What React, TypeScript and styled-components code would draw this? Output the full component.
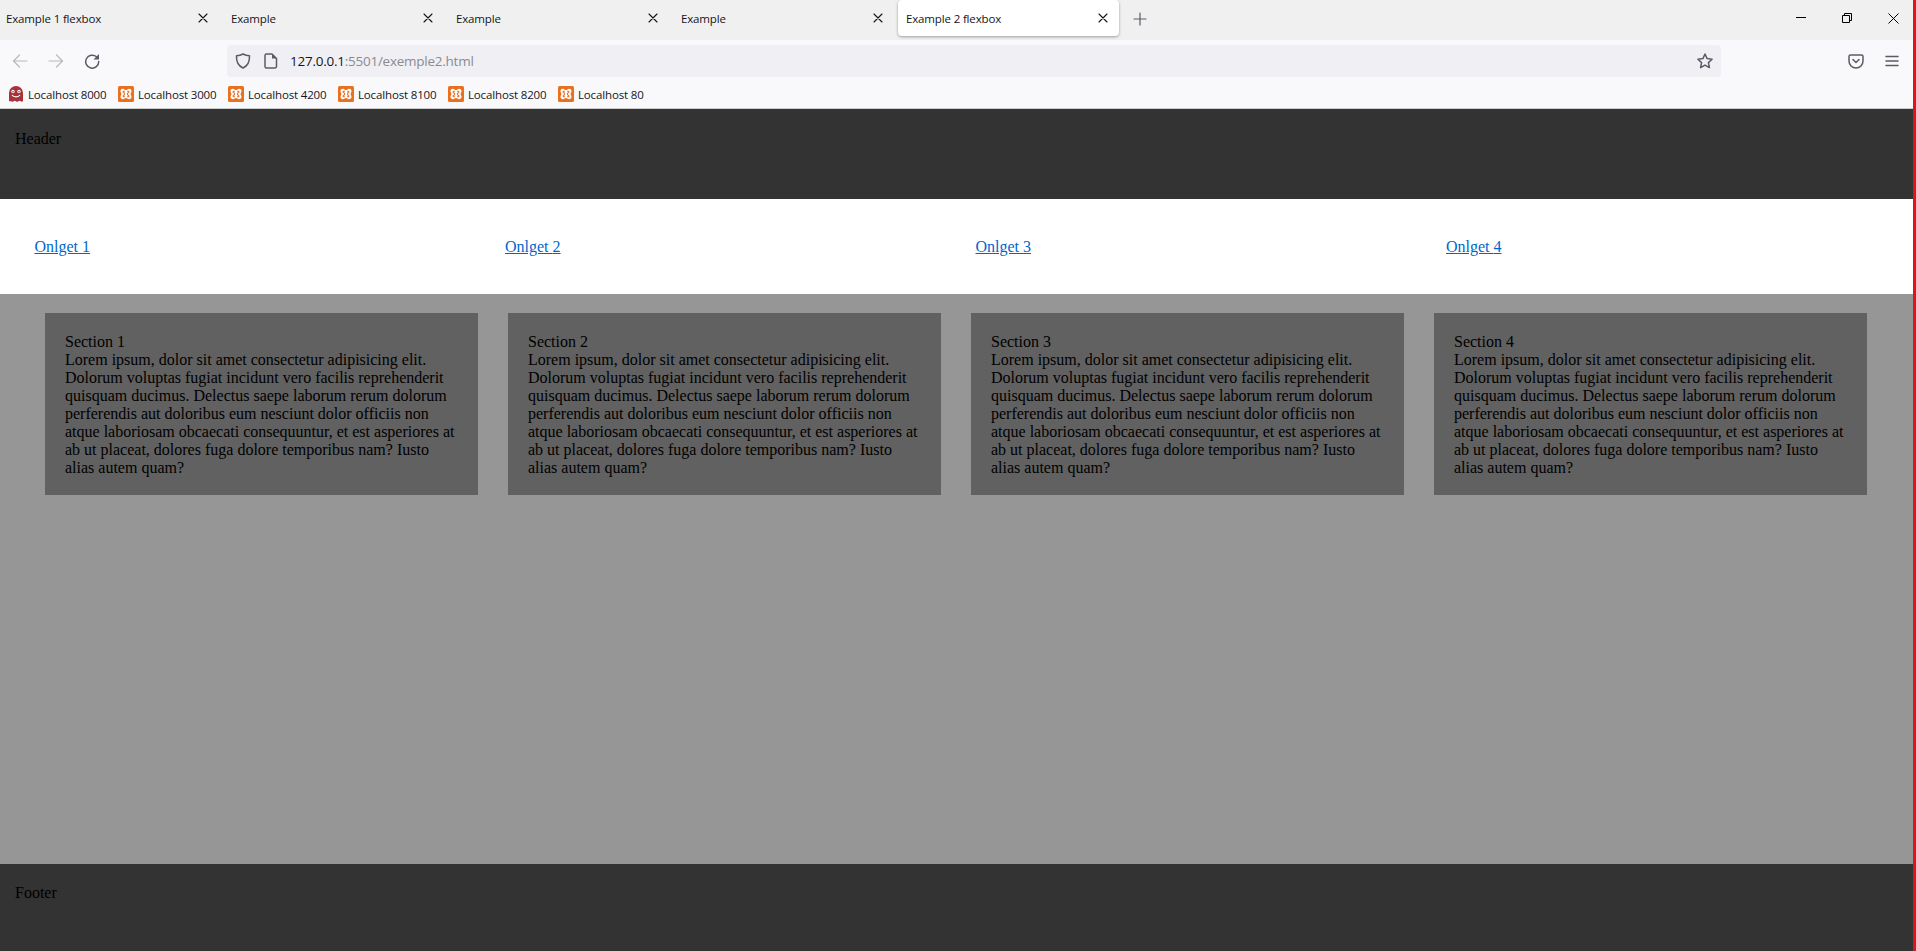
import React from 'react'
import styled, { createGlobalStyle } from 'styled-components'

const GlobalStyle = createGlobalStyle`
  html, body {
    margin: 0;
    padding: 0;
    height: 100%;
    overflow: hidden;
  }
  #root {
    height: 951px;
  }
`

const Window = styled.div`
  display: flex;
  flex-direction: column;
  height: 951px;
  border-right: 3px solid #e0141f;
  box-sizing: border-box;
  overflow: hidden;
`

// Browser chrome
const TabStrip = styled.div`
  display: flex;
  align-items: flex-start;
  height: 40px;
  flex: none;
  background: #f0f0f0;
  font-family: 'Open Sans', 'Noto Sans', sans-serif;
`

const Tabs = styled.div`
  display: flex;
  gap: 4px;
  margin-left: -2px;
`

const Tab = styled.div<{ $active?: boolean }>`
  display: flex;
  align-items: center;
  justify-content: space-between;
  box-sizing: border-box;
  width: 221px;
  height: 36px;
  padding: 0 11px 0 8px;
  font-size: 11.5px;
  letter-spacing: -0.15px;
  color: #15141a;
  background: ${(props) => (props.$active ? '#ffffff' : 'transparent')};
  border-radius: ${(props) => (props.$active ? '4px' : '0')};
  box-shadow: ${(props) => (props.$active ? '0 1px 3px rgba(0, 0, 0, 0.35)' : 'none')};
`

const TabTitle = styled.span`
  white-space: nowrap;
`

const NewTab = styled.div`
  display: flex;
  align-items: center;
  justify-content: center;
  width: 16px;
  height: 37px;
  margin-left: 13px;
  color: #5b5b66;
`

const WindowControls = styled.div`
  display: flex;
  gap: 6px;
  margin-left: auto;
  height: 36px;
  align-items: center;
  color: #000;
`

const WindowButton = styled.div`
  display: flex;
  align-items: center;
  justify-content: center;
  width: 40px;
`

const Toolbar = styled.div`
  display: flex;
  align-items: center;
  height: 42px;
  flex: none;
  background: #f9f9fb;
  color: #5b5b66;
`

const NavButton = styled.div<{ $faded?: boolean }>`
  display: flex;
  align-items: center;
  justify-content: center;
  width: 36px;
  height: 32px;
  opacity: ${(props) => (props.$faded ? 0.4 : 1)};
`

const NavGroup = styled.div`
  display: flex;
  width: 227px;
  padding-left: 2px;
  box-sizing: border-box;
`

const UrlBar = styled.div`
  display: flex;
  align-items: center;
  width: 1494px;
  height: 32px;
  box-sizing: border-box;
  padding: 0 8px;
  border-radius: 4px;
  background: #f0f0f4;
  font-family: 'Open Sans', 'Noto Sans', sans-serif;
`

const UrlIcons = styled.div`
  display: flex;
  align-items: center;
  gap: 13px;
  width: 55px;
`

const UrlText = styled.span`
  font-size: 13.5px;
  letter-spacing: -0.25px;
  color: #15141a;
  white-space: nowrap;
`

const UrlRest = styled.span`
  color: #8a8a92;
`

const UrlStar = styled.div`
  display: flex;
  margin-left: auto;
`

const ToolbarEnd = styled.div`
  display: flex;
  flex: 1;
  justify-content: flex-end;
  gap: 20px;
  padding-right: 13px;
`

const BookmarksBar = styled.div`
  display: flex;
  align-items: center;
  height: 27px;
  flex: none;
  box-sizing: border-box;
  padding: 0 0 2px 8px;
  background: #f9f9fb;
  border-bottom: 1px solid #cccccc;
  font-family: 'Open Sans', 'Noto Sans', sans-serif;
`

const Bookmark = styled.div`
  display: flex;
  align-items: center;
  gap: 4px;
  width: 110px;
  font-size: 11.5px;
  letter-spacing: -0.15px;
  color: #15141a;
  white-space: nowrap;
`

// Page content
const Page = styled.div`
  display: flex;
  flex-direction: column;
  flex: 1;
  min-height: 0;
  font-family: 'Liberation Serif', 'Times New Roman', serif;
  font-size: 16px;
  line-height: 18px;
  color: #000;
`

const Header = styled.header`
  height: 90px;
  flex: none;
  box-sizing: border-box;
  padding: 21px 15px;
  background: #333333;
`

const Nav = styled.nav`
  display: grid;
  grid-template-columns: repeat(4, 470.5px);
  align-items: center;
  height: 95px;
  flex: none;
  box-sizing: border-box;
  padding-left: 34.500px;
  background: #ffffff;
`

const NavLink = styled.a`
  justify-self: start;
  color: #0066cc;
  text-decoration: underline;
`

const Main = styled.main`
  display: flex;
  align-items: flex-start;
  flex: 1;
  gap: 30px;
  box-sizing: border-box;
  padding: 19px 46px 19px 45px;
  background: #969696;
`

const Section = styled.section`
  flex: 1;
  box-sizing: border-box;
  padding: 20px 20px 18px;
  background: #616161;
`

const Footer = styled.footer`
  height: 87px;
  flex: none;
  box-sizing: border-box;
  padding: 20px 15px;
  background: #333333;
`

const Stroke = styled.svg<{ $weight?: number; $butt?: boolean }>`
  display: block;
  fill: none;
  stroke: currentColor;
  stroke-width: ${(props) => props.$weight || 1.5};
  stroke-linecap: ${(props) => (props.$butt ? 'butt' : 'round')};
  stroke-linejoin: round;
`

const IconFill = styled.path`
  fill: currentColor;
  stroke: none;
`

const CloseIcon = () => (
  <Stroke width="10" height="10" viewBox="0 0 10 10" $weight={1.1}>
    <path d="M1 1l8 8M9 1L1 9" />
  </Stroke>
)

const GhostIcon = () => (
  <svg width="16" height="18" viewBox="0 0 16 18" style={{ flex: 'none' }}>
    <path
      d="M1 8a7 7 0 0 1 14 0v7.500c0 1.300-1.400 1.500-2.300.7-.8-.7-1.500-.7-2.300 0-.8.7-1.600.7-2.400 0-.8-.7-1.600-.7-2.400 0-.8.7-1.500.7-2.300 0C1.500 16 1 16.800 1 15.500z"
      fill="#a8323a"
    />
    <circle cx="5" cy="6.500" r="1.700" fill="#fff" />
    <circle cx="11" cy="6.500" r="1.700" fill="#fff" />
    <circle cx="5" cy="6.800" r=".7" fill="#5a1a20" />
    <circle cx="11" cy="6.800" r=".7" fill="#5a1a20" />
    <path d="M4 10c1.500 2.500 6.500 2.500 8 0" fill="none" stroke="#fff" strokeWidth="1.2" />
  </svg>
)

const XamppIcon = () => (
  <svg width="16" height="16" viewBox="0 0 16 16" style={{ flex: 'none' }}>
    <rect width="16" height="16" rx="1.500" fill="#e8701f" />
    <path
      d="M2.500 5.200C2.500 3 5 2.200 6.500 3.400c1 .7 2 .7 3 0C11 2.200 13.500 3 13.500 5.200c0 1.300-1 2-1 2.800s1 1.500 1 2.800c0 2.200-2.500 3-4 1.800-1-.7-2-.7-3 0-1.500 1.200-4 .4-4-1.800 0-1.300 1-2 1-2.800s-1-1.500-1-2.800z"
      fill="#fff"
    />
    <path
      d="M6.900 5.200H5.700c-.8 0-.8 1.300 0 1.500.6.100.9.700.9 1.300s-.3 1.200-.9 1.300c-.8.200-.8 1.500 0 1.500h1.200M9.100 5.200h1.200c.8 0 .8 1.300 0 1.500-.6.100-.9.700-.9 1.300s.3 1.200.9 1.300c.8.200.8 1.500 0 1.500H9.100"
      fill="none"
      stroke="#e8701f"
      strokeWidth="1.100"
    />
  </svg>
)

const tabs = ['Example 1 flexbox', 'Example', 'Example', 'Example', 'Example 2 flexbox']
const bookmarks = ['Localhost 3000', 'Localhost 4200', 'Localhost 8100', 'Localhost 8200', 'Localhost 80']
const lorem =
  'Lorem ipsum, dolor sit amet consectetur adipisicing elit. Dolorum voluptas fugiat incidunt vero facilis reprehenderit quisquam ducimus. Delectus saepe laborum rerum dolorum perferendis aut doloribus eum nesciunt dolor officiis non atque laboriosam obcaecati consequuntur, et est asperiores at ab ut placeat, dolores fuga dolore temporibus nam? Iusto alias autem quam?'

export default function App() {
  return (
    <>
      <GlobalStyle />
      <Window>
        <TabStrip>
          <Tabs>
            {tabs.map((title, i) => (
              <Tab key={i} $active={i === 4}>
                <TabTitle>{title}</TabTitle>
                <CloseIcon />
              </Tab>
            ))}
          </Tabs>
          <NewTab>
            <Stroke width="14" height="14" viewBox="0 0 14 14" $weight={1.2}>
              <path d="M7 1v12M1 7h12" />
            </Stroke>
          </NewTab>
          <WindowControls>
            <WindowButton>
              <Stroke width="10" height="10" viewBox="0 0 10 10" $weight={1} $butt>
                <path d="M0 4.500h10" />
              </Stroke>
            </WindowButton>
            <WindowButton>
              <Stroke width="10" height="10" viewBox="0 0 10 10" $weight={1} $butt>
                <path d="M.5 2.500h7v7h-7zM2.500 2.500v-2h7v7h-2" />
              </Stroke>
            </WindowButton>
            <WindowButton>
              <Stroke width="11" height="11" viewBox="0 0 11 11" $weight={1} $butt>
                <path d="M.5.5l10 10M10.500.5l-10 10" />
              </Stroke>
            </WindowButton>
          </WindowControls>
        </TabStrip>

        <Toolbar>
          <NavGroup>
            <NavButton $faded>
              <Stroke width="16" height="16" viewBox="0 0 16 16" $weight={1.2}>
                <path d="M15 8H1.500M7.500 2L1.500 8l6 6" />
              </Stroke>
            </NavButton>
            <NavButton $faded>
              <Stroke width="16" height="16" viewBox="0 0 16 16" $weight={1.2}>
                <path d="M1 8h13.500M8.500 2l6 6-6 6" />
              </Stroke>
            </NavButton>
            <NavButton>
              <Stroke width="16" height="16" viewBox="0 0 16 16">
                <path d="M12.500 3.800A6.500 6.500 0 1 0 14.700 8.500" />
                <IconFill d="M15 1v5.500H9.500z" />
              </Stroke>
            </NavButton>
          </NavGroup>
          <UrlBar>
            <UrlIcons>
              <Stroke width="16" height="16" viewBox="0 0 16 16">
                <path d="M8 1c2 1.200 4 1.700 6.500 1.800C14.800 9 12.500 13 8 15 3.500 13 1.200 9 1.500 2.800 4 2.700 6 2.200 8 1z" />
              </Stroke>
              <Stroke width="14" height="16" viewBox="0 0 14 16">
                <path d="M2.500 1h5.500l4.500 4.500V13.500a1.500 1.500 0 0 1-1.500 1.500h-8.500A1.500 1.500 0 0 1 1 13.500v-11A1.500 1.500 0 0 1 2.500 1z" />
                <IconFill d="M8 1l4.500 4.500H8z" />
              </Stroke>
            </UrlIcons>
            <UrlText>
              127.0.0.1<UrlRest>:5501/exemple2.html</UrlRest>
            </UrlText>
            <UrlStar>
              <Stroke width="16" height="16" viewBox="0 0 16 16">
                <path d="M8 1l2.100 4.600 5 .6-3.700 3.400 1 5L8 12.100 3.600 14.600l1-5L.9 6.200l5-.6z" />
              </Stroke>
            </UrlStar>
          </UrlBar>
          <ToolbarEnd>
            <Stroke width="16" height="16" viewBox="0 0 16 16">
              <path d="M2.500 2h11A1.500 1.500 0 0 1 15 3.500V8A7 7 0 0 1 1 8V3.500A1.500 1.500 0 0 1 2.500 2zM5 6.500L8 9.500l3-3" />
            </Stroke>
            <Stroke width="16" height="16" viewBox="0 0 16 16">
              <path d="M2 3.500h12M2 8h12M2 12.500h12" />
            </Stroke>
          </ToolbarEnd>
        </Toolbar>

        <BookmarksBar>
          <Bookmark>
            <GhostIcon />
            Localhost 8000
          </Bookmark>
          {bookmarks.map((name) => (
            <Bookmark key={name}>
              <XamppIcon />
              {name}
            </Bookmark>
          ))}
        </BookmarksBar>

        <Page>
          <Header>Header</Header>
          <Nav>
            {[1, 2, 3, 4].map((n) => (
              <NavLink key={n} href="#">
                Onlget {n}
              </NavLink>
            ))}
          </Nav>
          <Main>
            {[1, 2, 3, 4].map((n) => (
              <Section key={n}>
                Section {n}
                <br />
                {lorem}
              </Section>
            ))}
          </Main>
          <Footer>Footer</Footer>
        </Page>
      </Window>
    </>
  )
}
